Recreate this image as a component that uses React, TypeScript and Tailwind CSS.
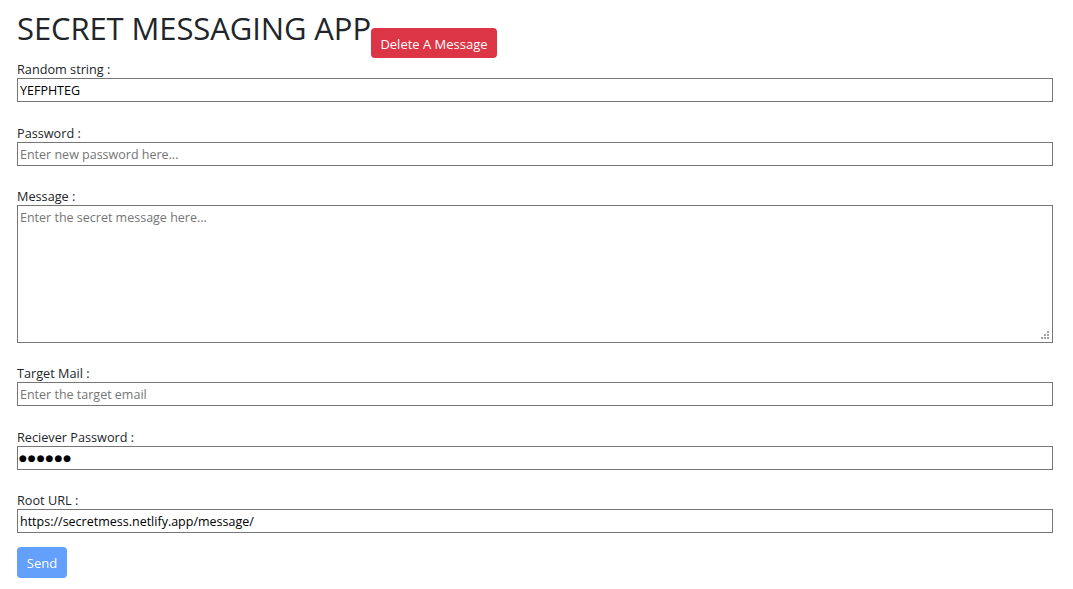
import React from "react";

const font = { fontFamily: '"Open Sans", "Noto Sans", sans-serif' };

export default function App() {
  const inputCls =
    "block w-full h-[24px] border border-[#767676] bg-white px-[2px] text-[12.5px] text-black placeholder:text-[#757575] outline-none";
  const labelCls = "block h-[16px] leading-[14px] text-[12.7px] text-[#212529]";
  return (
    <div className="min-h-[589px] w-[1073px] bg-white pl-[17px] pr-[20px]" style={font}>
      <div className="flex h-[62px] items-start">
        <h2 className="mt-[8px] text-[31px] leading-[40px] font-normal text-[#212529] tracking-[-0.1px]">
          SECRET MESSAGING APP
        </h2>
        <button className="mt-[28px] h-[30px] w-[126px] rounded-[4px] bg-[#dc3545] pt-[3px] text-[13px] text-white">
          Delete A Message
        </button>
      </div>
      <label className={labelCls}>Random string :</label>
      <input className={inputCls} defaultValue="YEFPHTEG" readOnly />
      <div className="h-[24px]" />
      <label className={labelCls}>Password :</label>
      <input className={inputCls} placeholder="Enter new password here..." />
      <div className="h-[23px]" />
      <label className={labelCls}>Message :</label>
      <div className="relative">
        <textarea
          className="block w-full h-[138px] resize-none border border-[#767676] bg-white px-[2px] py-[3px] text-[12.5px] text-black placeholder:text-[#757575] outline-none"
          placeholder="Enter the secret message here..."
        />
        <svg className="absolute bottom-[3px] right-[3px]" width="9" height="9" viewBox="0 0 9 9">
          <g fill="#a0a0a0">
            <rect x="6" y="0" width="2" height="2" />
            <rect x="3" y="3" width="2" height="2" />
            <rect x="6" y="3" width="2" height="2" />
            <rect x="0" y="6" width="2" height="2" />
            <rect x="3" y="6" width="2" height="2" />
            <rect x="6" y="6" width="2" height="2" />
          </g>
        </svg>
      </div>
      <div className="h-[23px]" />
      <label className={labelCls}>Target Mail :</label>
      <input className={inputCls} placeholder="Enter the target email" />
      <div className="h-[24px]" />
      <label className={labelCls}>Reciever Password :</label>
      <input
        className="block w-full h-[24px] border border-[#767676] bg-white px-[1px] text-[9px] tracking-[1px] text-black outline-none"
        style={{ fontFamily: '"DejaVu Sans", sans-serif' }}
        defaultValue={"\u25CF\u25CF\u25CF\u25CF\u25CF\u25CF"}
        readOnly
      />
      <div className="h-[23px]" />
      <label className={labelCls}>Root URL :</label>
      <input className={inputCls} defaultValue="https://secretmess.netlify.app/message/" readOnly />
      <div className="h-[14px]" />
      <button className="h-[31px] w-[50px] rounded-[4px] bg-[#62a0fb] pt-[2px] text-[13px] text-white">
        Send
      </button>
    </div>
  );
}
